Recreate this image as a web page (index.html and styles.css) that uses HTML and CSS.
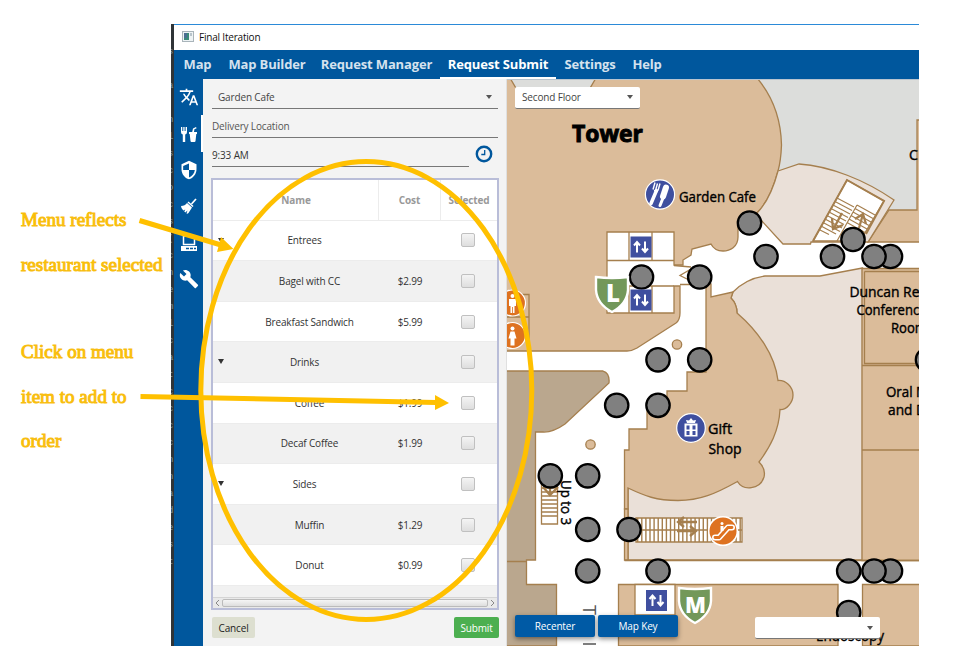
FILE: index.html
```html
<!DOCTYPE html>
<html lang="en">
<head>
<meta charset="utf-8">
<title>Final Iteration</title>
<link rel="stylesheet" href="styles.css">
</head>
<body>
<div class="page">
  <aside class="notes">
    <p class="note">Menu reflects<br>restaurant selected</p>
    <p class="note">Click on menu<br>item to add to<br>order</p>
  </aside>
  <div class="editor"><pre class="code">s

a

n
l
s
c
o
c
s
(
c
n
e
m
l
c
a
t
c
c
c
c
n
n
a
d
e
s
t</pre></div>
  <main class="window">
    <header class="titlebar">
      <svg class="app-icon" width="12" height="11" viewBox="0 0 12 11"><rect x=".5" y=".5" width="11" height="10" fill="#eef3f5" stroke="#a9b4ba"/><rect x="2" y="2" width="5" height="7" fill="#3b8a78"/><path d="M2 2h3v5H2z" fill="#4b6f93"/><path d="M9 2v3" stroke="#8294a0"/></svg>
      <span>Final Iteration</span>
    </header>
    <nav class="tabs">
      <a class="t1">Map</a><a class="t2">Map Builder</a><a class="t3">Request Manager</a><a class="t4 active">Request Submit</a><a class="t5">Settings</a><a class="t6">Help</a>
    </nav>
    <div class="content">
      <div class="sidebar">
        <div class="side"><svg viewBox="0 0 24 24" width="20" height="20"><path fill="#fff" d="M12.87 15.07l-2.54-2.51.03-.03A17.52 17.52 0 0014.07 6H17V4h-7V2H8v2H1v2h11.17C11.5 7.92 10.44 9.75 9 11.35 8.07 10.32 7.3 9.19 6.69 8h-2c.73 1.63 1.73 3.17 2.98 4.56l-5.09 5.02L4 19l5-5 3.11 3.11.76-2.04zM18.5 10h-2L12 22h2l1.12-3h4.75L21 22h2l-4.5-12zm-2.62 7l1.62-4.33L19.12 17h-3.24z"/></svg></div>
        <div class="side on"><svg viewBox="0 0 18 18" width="18" height="18"><path fill="#fff" d="M1 2h1.300v4h1V2h1.300v4h1V2H7v5q0 2-1.800 2.500V17H2.800V9.500Q1 9 1 7zM9 7h3.200l.8-3.500L16 2l.6 1.300-2.200 1L14 7h3v2h-.7L15.500 16q-.1 1-1 1h-3q-.9 0-1-1L9.700 9H9z"/></svg></div>
        <div class="side"><svg viewBox="0 0 24 24" width="20" height="20"><path fill="#fff" fill-rule="evenodd" d="M12 1 3 5v6c0 5.550 3.840 10.740 9 12 5.160-1.260 9-6.450 9-12V5zm0 3.200V12h7c-.5 4.100-3.200 7.700-7 8.900V12H5V7.200z"/></svg></div>
        <div class="side"><svg viewBox="0 0 18 18" width="18" height="18"><path d="M16 2l-4.500 5" stroke="#fff" stroke-width="1.700"/><path fill="#fff" d="M8.500 4.500l5 4.500-1 1-5-4.500zM7 6l5 4.500-3.500 5.500q-1 1-2 .5l1-3-2.200 2-1-1 1-2-2 1Q1 11.500 1 9q4 0 6-3z"/></svg></div>
        <div class="side"><svg viewBox="0 0 18 18" width="18" height="18"><path fill="none" stroke="#fff" stroke-width="1.500" d="M3.500 2h11v8.500h-11z"/><path fill="#fff" d="M1 12h16v5H1z"/><path stroke="#00579d" stroke-width="1.500" stroke-dasharray="3 1" d="M6 14.500h10"/></svg></div>
        <div class="side"><svg viewBox="0 0 24 24" width="20" height="20"><path fill="#fff" d="M22.700 19l-9.100-9.100c.9-2.300.4-5-1.500-6.900-2-2-5-2.400-7.400-1.300L9 6 6 9 1.600 4.700C.4 7.100.9 10.100 2.900 12.100c1.900 1.900 4.600 2.400 6.900 1.500l9.100 9.100c.4.4 1 .4 1.400 0l2.300-2.300c.5-.4.5-1.100.1-1.400z"/></svg></div>
      </div>
      <section class="request">
        <div class="field select">Garden Cafe<i class="caret"></i></div>
        <div class="field">Delivery Location</div>
        <div class="timerow"><div class="field dark">9:33 AM</div>
          <svg width="18" height="18" viewBox="0 0 18 18"><circle cx="9" cy="9" r="7.200" fill="none" stroke="#00579d" stroke-width="2.400"/><path d="M9.700 5v4.500H6.300" fill="none" stroke="#00579d" stroke-width="1.300"/></svg></div>
        <div class="table">
          <div class="row head"><span>Name</span><span>Cost</span><span>Selected</span></div>
          <div class="row group"><span><i class="open"></i>Entrees</span><span></span><span><b></b></span></div>
          <div class="row alt"><span>Bagel with CC</span><span>$2.99</span><span><b></b></span></div>
          <div class="row"><span>Breakfast Sandwich</span><span>$5.99</span><span><b></b></span></div>
          <div class="row alt group"><span><i class="open"></i>Drinks</span><span></span><span><b></b></span></div>
          <div class="row"><span>Coffee</span><span>$1.99</span><span><b></b></span></div>
          <div class="row alt"><span>Decaf Coffee</span><span>$1.99</span><span><b></b></span></div>
          <div class="row group"><span><i class="open"></i>Sides</span><span></span><span><b></b></span></div>
          <div class="row alt"><span>Muffin</span><span>$1.29</span><span><b></b></span></div>
          <div class="row"><span>Donut</span><span>$0.99</span><span><b></b></span></div>
          <div class="filler"></div>
          <div class="scroll"><svg width="5" height="8" viewBox="0 0 5 8"><path d="M4 1 1 4l3 3" fill="none" stroke="#888"/></svg><div class="thumb"></div><svg width="5" height="8" viewBox="0 0 5 8"><path d="M1 1l3 3-3 3" fill="none" stroke="#888"/></svg></div>
        </div>
        <div class="actions"><button class="cancel">Cancel</button><button class="submit">Submit</button></div>
      </section>
      <section class="map">
        <svg class="plan" width="412" height="567" viewBox="507 79 412 567">
          <defs>
            <g id="lift"><rect width="21" height="21" fill="#3f4f9f"/><path d="M6.500 16V6M3.500 9l3-3.500 3 3.500M14.500 5v10M11.500 12l3 3.500 3-3.500" fill="none" stroke="#fff" stroke-width="2"/></g>
            <g id="person"><circle r="13" fill="#de7220" stroke="#fff" stroke-width="1.200"/><circle cy="-7" r="2" fill="#fff"/></g>
            <path id="shield" d="M0 1Q16 3 32 1V14Q31 28 16 36 1 28 0 14z" fill="#73985a" stroke="#fff" stroke-width="2.400"/>
          </defs>
          <rect x="507" y="79" width="412" height="567" fill="#fff"/>
          <path fill="#dcdddb" d="M750 79h169v131H889L860 185 799 164 770 175z"/>
          <g stroke="#a57f4e" stroke-width="1.300" fill="#dbbc9a">
            <path d="M506 78H757C774 98 781 122 781.500 145C781 158 780 164 778 171C773 190 766 204 757 213L738 222V237C738 247 730 251 723 251C717 251 713 248 711 244L692 249 691 255 683 260V265H674V232H607V313H674V286H680V313Q680 320 676 323L637 348Q632 351 627 351H506z"/>
            <path fill="#dcdddb" d="M510 78l13 22h60l13-22z"/>
            <path d="M868 242 889 210H917V120H920V242z"/>
            <path fill="#eae0d8" d="M778 171 799 164C830 166 865 180 894 200L868 242H811L810.500 244H783L761 220 757 213C766 204 773 190 778 171z"/>
            <path fill="#fff" d="M847 180 884 201 860 241H813z"/>
            <path fill="#eae0d8" d="M862.500 268 820 276H765C750 278 740 285 733 292L731 298C736 303 737 308 737 313L740 430 640 470 628 488V560H862.500z"/>
            <path d="M706 284H711V297L733 292 731 298C736 303 737 308 737 313C758 331 775 355 778 380.500C786 380 793 387 793 395S786 410 780 409.500C779 431 770 447 759 462C765 468 765 473 764 477C760 490 743 491 737.500 481.500C715 494 700 500.500 678 500.500S645 496 628 488V509H624.500V450H629V429H647V405H667V391H687V372H706z"/>
            <path d="M624.500 509h3.500v51h-3.500z"/>
            <path d="M862 268.500H920V560.500H862z"/><path fill="none" d="M864.500 271.500H920M864.500 271.500V363.500H920M862 365.500H920M862 450H920M624.500 560.500H920"/>
            <path d="M618.500 646V584.500H838V646zM862.500 646V584.500H920V646z"/>
            <path fill="#baa78e" d="M506 371H603Q610 373 609 383L565 424Q553 432.500 543 432H535.500V560H526.500V584.500H556.500V646H506z"/>
            <path fill="none" d="M506 561.500H526.500M506 294.500H529V351M506 317H529M607 260.500H674M607 286H674M629 232v28M652 232v28M629 286v27M652 286v27M674 265.500l17 1.500M691 284.500h-11M691 269l-11 6.500 11 5.500"/>
            <path fill="none" stroke-width="2" d="M813 241l34-61 37 21-18 33"/>
            <circle cx="677" cy="344.500" r="4.700"/><circle cx="590.500" cy="444.500" r="4.700"/>
            <path fill="#fff" d="M635 584.500h40V615h-40zM541.500 479.500h16V524h-16zM636 518h106v24H636z"/>
            <path fill="none" d="M541 484h16m-16 4h16m-16 4h16m-16 4h16m-16 4h16m-16 4h16m-16 4h16m-16 4h16m-16 4h16M640 530h102"/>
            <path fill="none" stroke-dasharray="1.400 2.700" stroke-width="24" d="M637 530h105"/>
            <path fill="none" stroke-width="1.200" d="M837 198l17 9m-19-5.500 17 9m-19-5.500 17 9m-19-5.500 17 9m-19-5.500 17 9m-19-5.500 17 9m-19-5.500 17 9m-19-5.500 17 9m-19-5.500 15 8m-17-4.500 10 5M857 205l18 10m-20-6.500 18 10m-20-6.500 18 10m-20-6.500 18 10m-20-6.500 18 10m-20-6.500 18 10M857 205l-20 36"/>
            <path fill="none" stroke-width="2.300" d="M842 213l-8 15m-2-10 1 11 10-4M859 228l4-14m-8 5 8-5 3 10M684 517l-6 5 6 5M678 522h19M690 526l6 5-6 5M677 531h18M543 487l7 8 8-8M550 480v15"/>
          </g>
          <g font-family="'Open Sans','Noto Sans',sans-serif" font-size="14" fill="#000" stroke="#000" stroke-width=".4">
            <text x="572" y="142" font-size="24" font-weight="700" stroke-width="1" textLength="71" lengthAdjust="spacingAndGlyphs">Tower</text>
            <text x="679" y="202" textLength="77" lengthAdjust="spacingAndGlyphs">Garden Cafe</text>
            <text x="708" y="434" textLength="24" lengthAdjust="spacingAndGlyphs">Gift</text><text x="708.500" y="454" textLength="33" lengthAdjust="spacingAndGlyphs">Shop</text>
            <text x="909" y="160">C</text>
            <text x="849.500" y="297" textLength="82" lengthAdjust="spacingAndGlyphs">Duncan Reid</text><text x="856.500" y="315" textLength="70" lengthAdjust="spacingAndGlyphs">Conference</text><text x="891" y="333" textLength="36" lengthAdjust="spacingAndGlyphs">Room</text>
            <text x="886" y="396.500" textLength="42" lengthAdjust="spacingAndGlyphs">Oral M</text><text x="888" y="414.500" textLength="38" lengthAdjust="spacingAndGlyphs">and D</text>
            <text x="816" y="641" textLength="68" lengthAdjust="spacingAndGlyphs">Endoscopy</text>
            <text transform="translate(561 480) rotate(90)" textLength="45" lengthAdjust="spacingAndGlyphs">Up to 3</text>
            <text transform="translate(583 605) rotate(90)" font-size="18" fill="#555" stroke="none">T</text>
            <path d="M583 644h13" stroke="#555" stroke-width="1.500"/>
          </g>
          <g fill="#808080" stroke="#000" stroke-width="2.300">
            <circle cx="749.500" cy="223" r="11.700"/><circle cx="766" cy="256.500" r="11.700"/><circle cx="832.500" cy="256.500" r="11.700"/><circle cx="890.500" cy="256.500" r="11.700"/><circle cx="874" cy="256.500" r="11.700"/><circle cx="853" cy="239.500" r="11.700"/><circle cx="641.500" cy="277" r="11.700"/><circle cx="699.700" cy="277" r="11.700"/><circle cx="658" cy="359.800" r="11.700"/><circle cx="699.700" cy="359.800" r="11.700"/><circle cx="616.700" cy="405.300" r="11.700"/><circle cx="658" cy="405.300" r="11.700"/><circle cx="550.300" cy="475.800" r="11.700"/><circle cx="587.700" cy="475.800" r="11.700"/><circle cx="587.700" cy="529.500" r="11.700"/><circle cx="629" cy="529.500" r="11.700"/><circle cx="587.700" cy="571" r="11.700"/><circle cx="658" cy="571" r="11.700"/><circle cx="848.700" cy="571" r="11.700"/><circle cx="890.500" cy="571" r="11.700"/><circle cx="874" cy="571" r="11.700"/><circle cx="848.700" cy="612.500" r="11.700"/><circle cx="927.500" cy="359.800" r="11.700"/>
          </g>
          <use href="#lift" x="630.500" y="236.500"/><use href="#lift" x="630.500" y="289.500"/><use href="#lift" x="646" y="590"/>
          <use href="#shield" x="596" y="276"/><use href="#shield" x="679" y="587"/>
          <g fill="#fff" font-family="'Open Sans',sans-serif" font-weight="800" font-size="24"><text x="606" y="302">L</text><text x="685" y="613" font-size="23" textLength="21" lengthAdjust="spacingAndGlyphs">M</text></g>
          <g transform="translate(512.500 303)"><use href="#person"/><path fill="#fff" d="M-3.500-4h7v7H2v7H.4V4H-.4v6H-2V3h-1.500z"/></g>
          <g transform="translate(512.500 335.500)"><use href="#person"/><path fill="#fff" d="M-2-4h4l2 7H2v7H-2V3h-2z"/></g>
          <g transform="translate(660 194.500)"><circle r="14.600" fill="#3f4f9f" stroke="#fff" stroke-width="1.200"/><path d="M-3.500-4-9 9" stroke="#fff" stroke-width="3.500" stroke-linecap="round"/><path d="M-7-5l2-7M-4.500-4l2-7M-2-4l2-7M-6-4l4 1" stroke="#fff" stroke-width="1.400"/><path d="M6-7 3 2" stroke="#fff" stroke-width="6" stroke-linecap="round"/><path d="M4 1 0 11" stroke="#fff" stroke-width="3" stroke-linecap="round"/></g>
          <g transform="translate(691 428)"><circle r="14.300" fill="#3f4f9f" stroke="#fff" stroke-width="1.200"/><path d="M-6.500-4.500h13V8.500h-13zM-4-5l-1-3 3 .5L0-10l2 2.500L5-8 4-5z" fill="#fff"/><path d="M-4.500-2.500h3v4h-3zM1.500-2.500h3v4h-3zM-4.500 3h3v4h-3zM1.500 3h3v4h-3z" fill="#3f4f9f"/></g>
          <g transform="translate(723 531)"><circle r="14.300" fill="#de7220" stroke="#fff" stroke-width="1.500"/><path d="M-8 6.500h4L5-3.500h4" fill="none" stroke="#fff" stroke-width="6" stroke-linecap="round" stroke-linejoin="round"/><path d="M-8 6.500h4L5-3.500h4" fill="none" stroke="#de7220" stroke-width="2.800" stroke-linecap="round"/><path d="M-1-5v5" stroke="#fff" stroke-width="3"/><circle cx="-1" cy="-7.500" r="1.500" fill="#fff"/></g>
        </svg>
        <div class="floor">Second Floor<i class="caret"></i></div>
        <div class="mapbar"><button>Recenter</button><button>Map Key</button><div class="search"><i class="caret"></i></div></div>
      </section>
    </div>
  </main>
  <svg class="marks" width="954" height="668" viewBox="0 0 954 668">
    <g fill="none" stroke="#ffc000" stroke-width="5"><ellipse cx="366.300" cy="390.500" rx="165.500" ry="229"/><path d="M139.500 220.500 221 245M140.500 396.500 436 402.500"/></g>
    <path fill="#ffc000" d="M233.500 249l-16.500 3 4-15zM449 403l-14 7v-15z"/>
  </svg>
</div>
</body>
</html>
```
FILE: styles.css
```css
* { box-sizing: border-box; }
body { margin: 0; background: #fff; font-family: "Open Sans", "Noto Sans", sans-serif; font-size: 10px; color: #333; }
.page { position: relative; width: 954px; height: 668px; padding-top: 24px; display: grid; grid-template-columns: 171px 3px 745px; overflow: hidden; }
.notes { padding: 174px 0 0 21px; font: 19px/44.5px "Liberation Serif", serif; letter-spacing: .04px; color: #ffc000; -webkit-text-stroke: 1px #f8be10; white-space: nowrap; }
.note { margin: 0 0 43px; }
.editor { height: 622px; background: #2f3437; overflow: hidden; }
.code { margin: 20px 0 0 -3px; font: 9px/17px "Liberation Mono", monospace; color: #8297a0; }
.window { height: 622px; border-top: 1px solid #2b8ad8; display: flex; flex-direction: column; overflow: hidden; }
.titlebar { height: 25px; display: flex; align-items: center; gap: 5px; padding: 0 0 2px 8px; font-size: 10px; letter-spacing: -.2px; color: #111; }
.tabs { height: 29px; background: #00579d; display: flex; font-weight: 700; font-size: 13px; letter-spacing: -.15px; line-height: 28px; color: #d5e2ee; white-space: nowrap; }
.tabs a { height: 28px; text-align: center; }
.t1 { width: 47px; }
.t2 { width: 92px; }
.t3 { width: 127px; }
.tabs .t4 { width: 116px; height: 29px; }
.t5 { width: 68px; }
.t6 { width: 46px; }
.tabs .active { color: #fff; border-bottom: 2px solid #fff; }
.content { flex: 1; display: grid; grid-template-columns: 29px 304px 412px; min-height: 0; }
.sidebar { background: #00579d; }
.side { height: 36.400px; display: flex; align-items: center; justify-content: center; padding-left: 2px; border-right: 2px solid transparent; }
.side.on { border-right-color: #fff; }
.request { background: #f3f3f3; padding: 4px 8px 0 9px; border-right: 1px solid #e0e0e0; }
.field { height: 26px; line-height: 28px; border-bottom: 1px solid #777; color: #555; white-space: nowrap; margin: 0 0 3px; letter-spacing: -.15px; }
.select { padding: 2px 6px 0; display: flex; justify-content: space-between; align-items: center; color: #444; }
.dark { color: #333; }
.caret { border: 3.500px solid transparent; border-top: 4px solid #555; border-bottom: 0; }
.timerow { display: flex; justify-content: space-between; align-items: center; padding-right: 5px; height: 28px; margin-top: -1px; }
.timerow .field { width: 257px; margin: 0; }
.table { margin-top: 10px; width: 288px; height: 432px; margin-left: -1px; border: 2px solid #b9bdd8; background: #fff; }
.row { height: 40.600px; display: grid; grid-template-columns: 166px 62px 56px; border-bottom: 1px solid #ececec; }
.row span { display: flex; align-items: center; justify-content: center; letter-spacing: -.16px; color: #333; }
.row span:first-child { padding-left: 27px; position: relative; }
.row.group span:first-child { padding-left: 17px; }
.row.head span { color: #999; font-weight: 700; letter-spacing: -.15px; border-right: 1px solid #ececec; }
.row.head span:first-child { padding-left: 1px; }
.row.head span:last-child { border: 0; }
.alt, .filler { background: #f1f1f1; }
.row b { width: 14px; height: 14px; border: 1px solid #c0c0c0; border-radius: 2px; background: linear-gradient(#f4f4f4, #dedede); margin-right: 2px; }
.open { position: absolute; left: 5px; top: 17px; border: 3.500px solid transparent; border-top: 5px solid #333; border-bottom: 0; }
.filler { height: 11px; }
.scroll { height: 11px; display: flex; align-items: center; gap: 2px; padding: 0 2px; background: #e9e9e9; border-top: 1px solid #d5d5d5; }
.thumb { flex: 1; height: 8px; border: 1px solid #bbb; border-radius: 2px; background: linear-gradient(#f5f5f5, #dedede); }
.actions { display: flex; justify-content: space-between; margin-top: 7px; margin-right: -1px; }
button { font: 10px "Open Sans", sans-serif; border: 0; border-radius: 2px; padding: 0; height: 21px; letter-spacing: -.15px; }
.cancel { width: 43px; background: #dddfd0; color: #222; }
.submit { width: 45px; background: #4caf50; color: #fff; }
.map { position: relative; overflow: hidden; border-top: 1px solid #b9c4cf; }
.plan { display: block; margin-top: -1px; }
.floor { position: absolute; left: 8px; top: 7px; width: 125px; height: 22px; background: #fff; border-radius: 2px; border-bottom: 1px solid #777; padding: 0 7px 1px; display: flex; align-items: center; justify-content: space-between; color: #444; letter-spacing: -.15px; }
.mapbar { position: absolute; left: 8px; bottom: 9px; display: flex; gap: 3px; }
.mapbar button { width: 80px; height: 22px; background: #005aa5; color: #fff; box-shadow: 0 2px 5px rgba(0,0,0,.45); }
.search { width: 125px; height: 22px; margin: 2px 0 -2px 74px; background: #fff; border-radius: 2px; border-bottom: 1px solid #777; display: flex; align-items: center; justify-content: flex-end; padding-right: 7px; }
.marks { position: absolute; left: 0; top: 0; pointer-events: none; }
```
